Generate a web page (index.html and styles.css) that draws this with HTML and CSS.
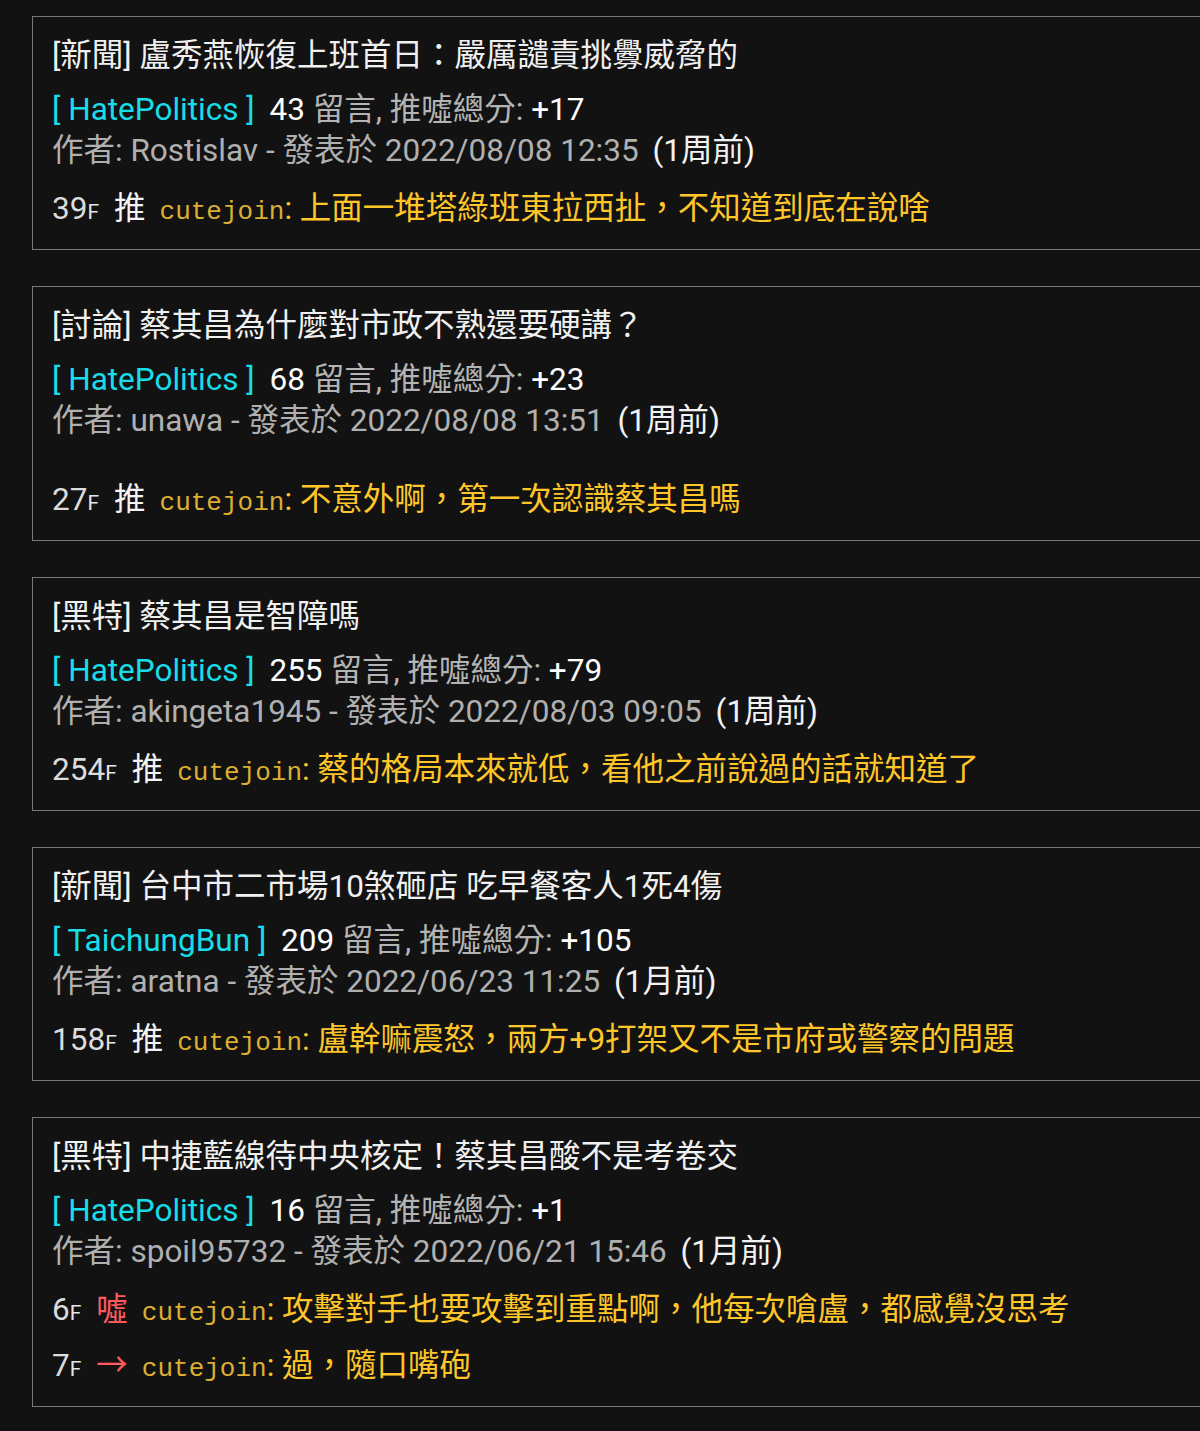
FILE: index.html
```html
<!DOCTYPE html>
<html lang="zh-Hant">
<head>
<meta charset="utf-8">
<title>PTT</title>
<link rel="stylesheet" href="styles.css">
</head>
<body>
<div class="list">
  <div class="card">
    <div class="title">[新聞] 盧秀燕恢復上班首日：嚴厲譴責挑釁威脅的</div>
    <div class="board"><span class="bname">[ HatePolitics ]</span> <span class="num">43</span> 留言, 推噓總分: <span class="num">+17</span></div>
    <div class="author">作者: Rostislav - 發表於 2022/08/08 12:35 <span class="ago">(1周前)</span></div>
    <div class="comments">
      <div class="cmt"><span class="floor">39<span class="f">F</span></span><span class="tag push">推</span><span class="user">cutejoin</span><span class="text">: 上面一堆塔綠班東拉西扯，不知道到底在說啥</span></div>
    </div>
  </div>
  <div class="card">
    <div class="title">[討論] 蔡其昌為什麼對市政不熟還要硬講？</div>
    <div class="board"><span class="bname">[ HatePolitics ]</span> <span class="num">68</span> 留言, 推噓總分: <span class="num">+23</span></div>
    <div class="author">作者: unawa - 發表於 2022/08/08 13:51 <span class="ago">(1周前)</span></div>
    <div class="comments extra">
      <div class="cmt"><span class="floor">27<span class="f">F</span></span><span class="tag push">推</span><span class="user">cutejoin</span><span class="text">: 不意外啊，第一次認識蔡其昌嗎</span></div>
    </div>
  </div>
  <div class="card">
    <div class="title">[黑特] 蔡其昌是智障嗎</div>
    <div class="board"><span class="bname">[ HatePolitics ]</span> <span class="num">255</span> 留言, 推噓總分: <span class="num">+79</span></div>
    <div class="author">作者: akingeta1945 - 發表於 2022/08/03 09:05 <span class="ago">(1周前)</span></div>
    <div class="comments">
      <div class="cmt"><span class="floor">254<span class="f">F</span></span><span class="tag push">推</span><span class="user">cutejoin</span><span class="text">: 蔡的格局本來就低，看他之前說過的話就知道了</span></div>
    </div>
  </div>
  <div class="card">
    <div class="title">[新聞] 台中市二市場10煞砸店 吃早餐客人1死4傷</div>
    <div class="board"><span class="bname">[ TaichungBun ]</span> <span class="num">209</span> 留言, 推噓總分: <span class="num">+105</span></div>
    <div class="author">作者: aratna - 發表於 2022/06/23 11:25 <span class="ago">(1月前)</span></div>
    <div class="comments">
      <div class="cmt"><span class="floor">158<span class="f">F</span></span><span class="tag push">推</span><span class="user">cutejoin</span><span class="text">: 盧幹嘛震怒，兩方+9打架又不是市府或警察的問題</span></div>
    </div>
  </div>
  <div class="card">
    <div class="title">[黑特] 中捷藍線待中央核定！蔡其昌酸不是考卷交</div>
    <div class="board"><span class="bname">[ HatePolitics ]</span> <span class="num">16</span> 留言, 推噓總分: <span class="num">+1</span></div>
    <div class="author">作者: spoil95732 - 發表於 2022/06/21 15:46 <span class="ago">(1月前)</span></div>
    <div class="comments">
      <div class="cmt"><span class="floor">6<span class="f">F</span></span><span class="tag boo">噓</span><span class="user">cutejoin</span><span class="text">: 攻擊對手也要攻擊到重點啊，他每次嗆盧，都感覺沒思考</span></div>
      <div class="cmt"><span class="floor">7<span class="f">F</span></span><span class="tag arrow">→</span><span class="user">cutejoin</span><span class="text">: 過，隨口嘴砲</span></div>
    </div>
  </div>
</div>
</body>
</html>
```
FILE: styles.css
```css
html, body {
  margin: 0;
  padding: 0;
  background: #121212;
  overflow-x: hidden;
}
body {
  font-family: Roboto, "Noto Sans CJK TC", "Noto Sans", sans-serif;
  font-size: 31.5px;
  color: #ececec;
}
.list {
  padding: 16px 0 20px 32px;
  display: flex;
  flex-direction: column;
  gap: 36px;
  width: 1220px;
}
.card {
  border: 1px solid #7a7a7a;
  padding: 18px 19px 19px 19px;
  background: #121212;
}
.title {
  line-height: 42px;
  height: 42px;
  color: #f0f0f0;
  white-space: nowrap;
}
.board {
  margin-top: 12px;
  line-height: 42px;
  height: 42px;
  color: #b4b4b4;
  white-space: nowrap;
}
.bname {
  color: #18dde8;
  margin-right: 7px;
}
.num {
  color: #ffffff;
}
.author {
  line-height: 40px;
  height: 40px;
  color: #b0b0b0;
  white-space: nowrap;
}
.ago {
  color: #f2f2f2;
  margin-left: 6px;
}
.comments {
  margin-top: 17px;
  display: flex;
  flex-direction: column;
  gap: 14px;
}
.comments.extra {
  margin-top: 38px;
}
.cmt {
  line-height: 42px;
  height: 42px;
  white-space: nowrap;
}
.floor {
  color: #dcdcdc;
}
.f {
  font-size: 21px;
  color: #e6e6e6;
}
.tag {
  display: inline-block;
  margin-left: 15px;
  margin-right: 14px;
}
.push {
  color: #f4f4f4;
}
.boo {
  color: #ff5a5f;
}
.arrow {
  color: #ff5a5f;
}
.user {
  font-family: "Liberation Mono", "DejaVu Sans Mono", monospace;
  font-size: 26px;
  color: #dcae32;
}
.text {
  color: #ffc62a;
}
```
